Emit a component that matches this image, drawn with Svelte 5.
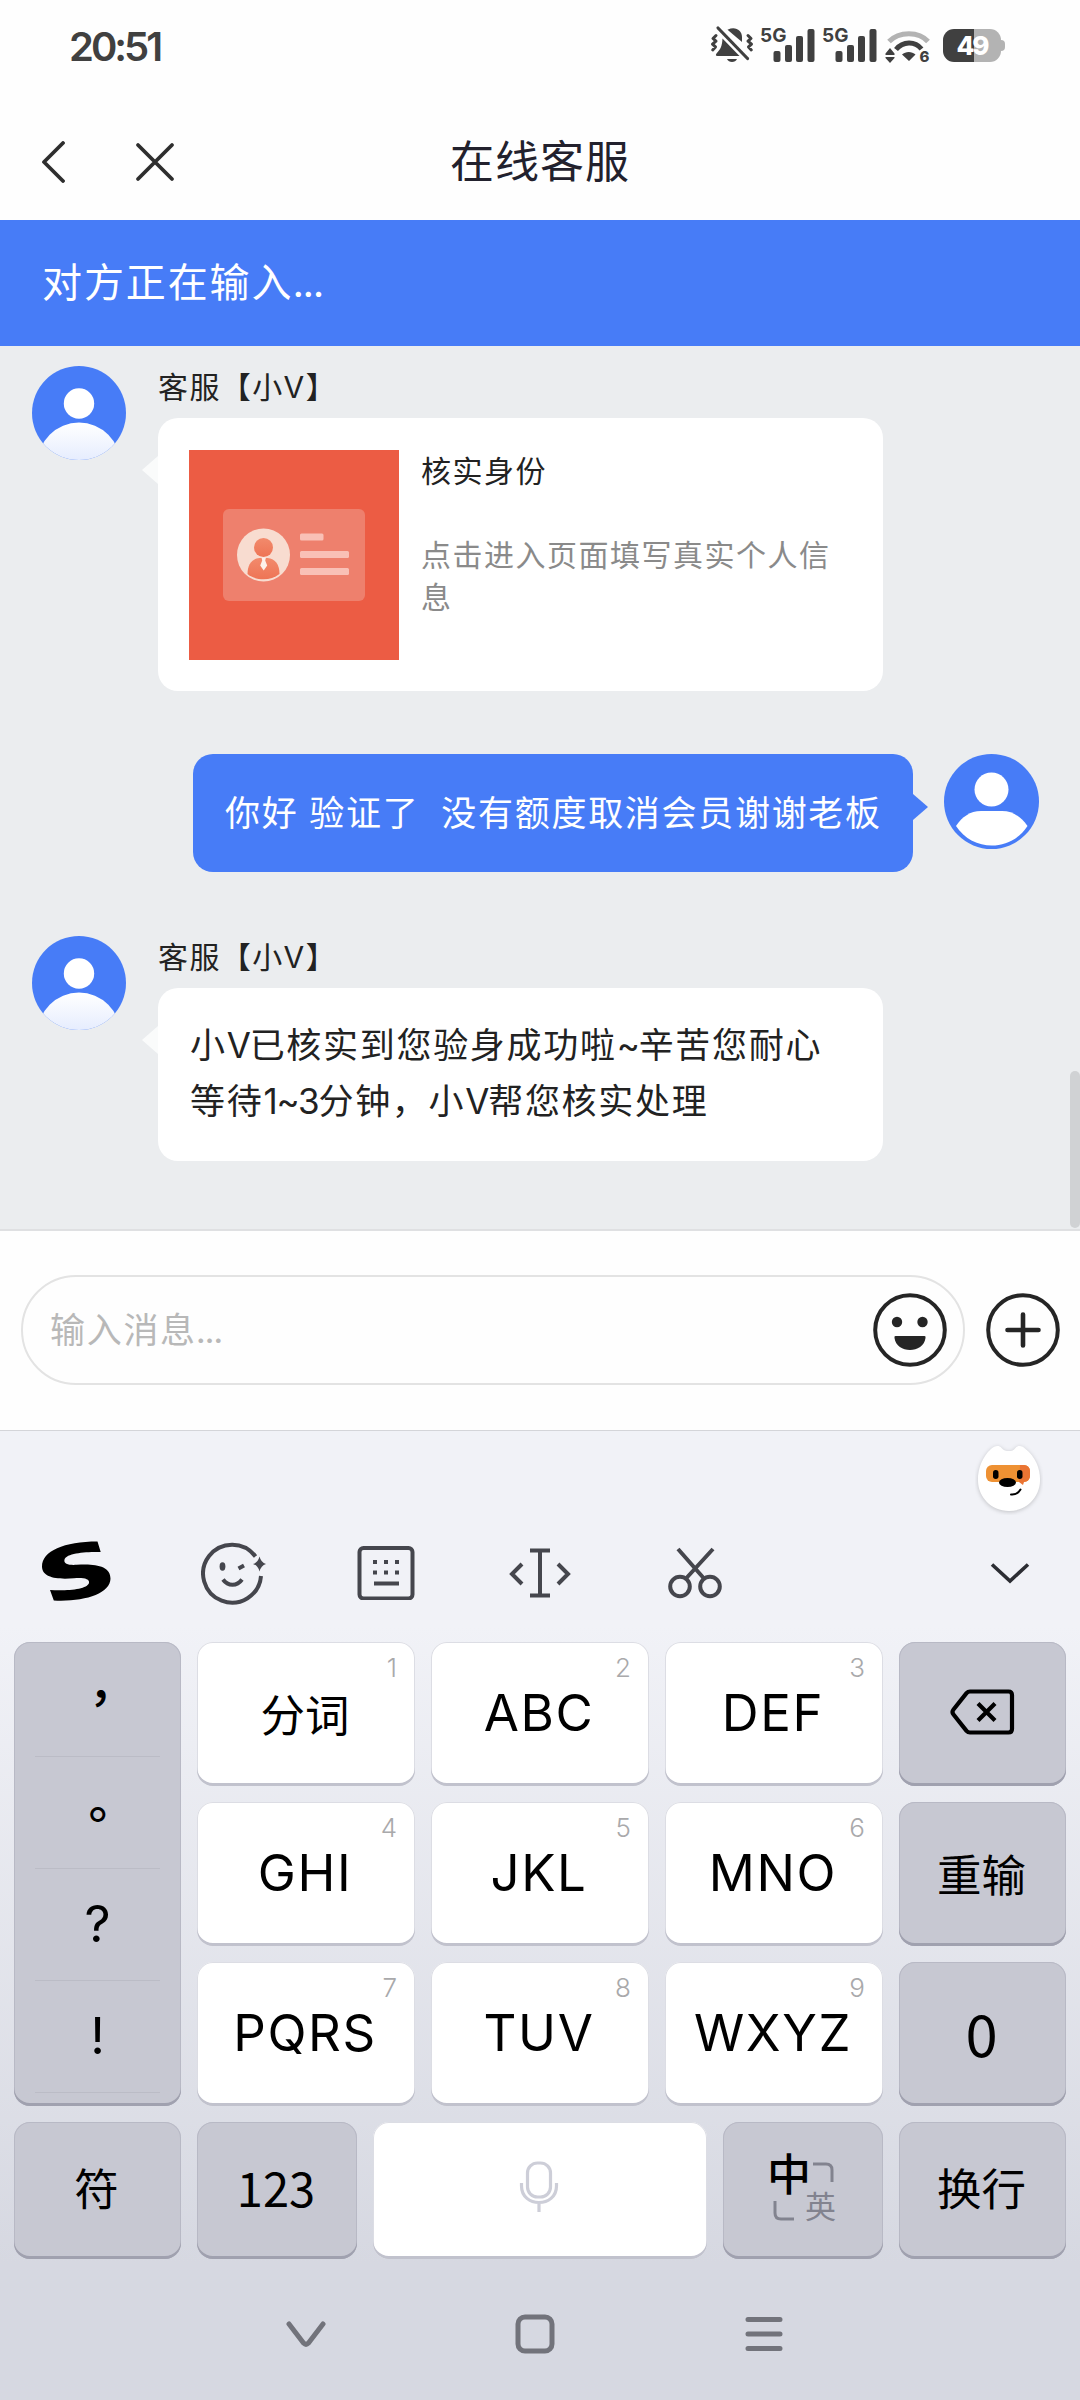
<script lang="ts">
	type Message = {
		id: number;
		from: 'agent' | 'user';
		name?: string;
		lines?: string[];
		card?: { title: string; desc: string };
	};

	const messages: Message[] = [
		{
			id: 1,
			from: 'agent',
			name: '客服【小V】',
			card: { title: '核实身份', desc: '点击进入页面填写真实个人信息' }
		},
		{ id: 2, from: 'user', lines: ['你好 验证了  没有额度取消会员谢谢老板'] },
		{
			id: 3,
			from: 'agent',
			name: '客服【小V】',
			lines: ['小V已核实到您验身成功啦~辛苦您耐心', '等待1~3分钟，小V帮您核实处理']
		}
	];

	const keys = [
		{ label: '分词', num: 1, cjk: true },
		{ label: 'ABC', num: 2 },
		{ label: 'DEF', num: 3 },
		{ label: 'GHI', num: 4 },
		{ label: 'JKL', num: 5 },
		{ label: 'MNO', num: 6 },
		{ label: 'PQRS', num: 7 },
		{ label: 'TUV', num: 8 },
		{ label: 'WXYZ', num: 9 }
	];

	const sims = [1, 2];

	// latin runs sit tighter than the chinese text around them
	function runs(line: string) {
		return line.split(/([A-Z~\d]+)/).filter(Boolean);
	}
	function isLatin(run: string) {
		return /^[A-Z~\d]/.test(run);
	}
</script>

<div class="phone">
	<div class="status">
		<span class="time">20:51</span>
		<div class="status-icons">
			<svg class="bell" width="44" height="38" viewBox="0 0 44 38">
				<g fill="#404040">
					<path d="M18 4.500C25 .8 32 5 32 12v5L17.500 4.800z" />
					<path d="M12.500 13.500 29.500 31H7.500c-2 0-2-1.500-.8-2.800C10.500 24 12 22 12.500 13.500z" />
					<path d="M17 34h10c-1.500 4-8.500 4-10 0z" />
				</g>
				<g fill="none" stroke="#404040" stroke-linecap="round" stroke-linejoin="round">
					<path d="M8 3 37.500 33.500" stroke-width="3.200" />
					<path
						d="M6 10.500 3 13.500l3 2.700-3.500 3 3 2.700-2.800 3M38 10.500l3 3-3 2.700 3.500 3-3 2.700 2.800 3"
						stroke-width="3"
					/>
				</g>
			</svg>
			{#each sims as sim (sim)}
				<svg class="signal" width="56" height="38" viewBox="0 0 56 38">
					<text x="0" y="16.500" class="net">5G</text>
					<g fill="#404040">
						<rect x="13.500" y="26" width="7" height="11" rx="2" />
						<rect x="25" y="20" width="7" height="17" rx="2" />
						<rect x="36" y="11" width="7" height="26" rx="2" />
						<rect x="47.500" y="4" width="7" height="33" rx="2" />
					</g>
				</svg>
			{/each}
			<svg class="wifi" width="50" height="42" viewBox="0 0 50 42">
				<path d="M4 16.500C14 6 34 6 43 16.500" fill="none" stroke="#b3b3b3" stroke-width="5" />
				<path d="M11 24.500C18 16 30 16 36.500 24" fill="none" stroke="#404040" stroke-width="5" />
				<path
					d="M17 29.500c3.500-3.500 10-3.500 13.500 0L24 36zM5 23l4.500 5.500v1.500h-9v-1.500zM.5 32h9v1L5 38l-4.500-5z"
					fill="#404040"
				/>
				<text x="34.500" y="37" class="gen">6</text>
			</svg>
			<div class="battery"><span>49</span></div>
		</div>
	</div>

	<header class="nav">
		<svg width="24" height="42" viewBox="0 0 24 42">
			<path
				d="M22 2 3 21l19 19"
				fill="none"
				stroke="#2e2e2e"
				stroke-width="3.800"
				stroke-linecap="round"
				stroke-linejoin="round"
			/>
		</svg>
		<svg class="close" width="40" height="40" viewBox="0 0 40 40">
			<path
				d="m3 3 34 34M37 3 3 37"
				fill="none"
				stroke="#2e2e2e"
				stroke-width="3.800"
				stroke-linecap="round"
			/>
		</svg>
		<h1>在线客服</h1>
	</header>

	<div class="typing">对方正在输入<span class="dots">...</span></div>

	<main class="chat">
		{#each messages as m (m.id)}
			<div class="row {m.from}">
				{#if m.from === 'agent'}
					<svg class="avatar" width="94" height="94" viewBox="0 0 94 94">
						<defs>
							<linearGradient id="body{m.id}" x1="0" y1="57" x2="0" y2="94" gradientUnits="userSpaceOnUse">
								<stop offset="0" stop-color="#fff" />
								<stop offset="1" stop-color="#e6edfe" />
							</linearGradient>
							<clipPath id="clip{m.id}"><circle cx="47" cy="47" r="47" /></clipPath>
						</defs>
						<g clip-path="url(#clip{m.id})">
							<rect width="94" height="94" fill="#477cf7" />
							<circle cx="47" cy="37.500" r="15.200" fill="#fff" />
							<circle cx="47" cy="98" r="41.500" fill="url(#body{m.id})" />
						</g>
					</svg>
				{/if}
				<div class="content">
					{#if m.name}<div class="name">{m.name}</div>{/if}
					<div class="bubble" class:card={m.card}>
						{#if m.card}
							<svg class="thumb" width="210" height="210" viewBox="0 0 210 210">
								<defs>
									<linearGradient id="man" x1="0" y1="0" x2="0" y2="1">
										<stop offset="0" stop-color="#f28a6c" />
										<stop offset="1" stop-color="#ee7455" />
									</linearGradient>
								</defs>
								<rect width="210" height="210" fill="#ec5c44" />
								<rect x="34" y="59" width="142" height="92" rx="6" fill="#ee806d" />
								<circle cx="74.500" cy="105" r="26.500" fill="#f8dcd0" />
								<circle cx="74.500" cy="97.500" r="9.500" fill="url(#man)" />
								<path
									d="M58.500 124c0-9 4-15.500 12-16h8c8 .5 12 7 12 16-8.500 7-23.500 7-32 0z"
									fill="url(#man)"
								/>
								<path d="m72.500 107.500h4.500l-.8 3 2 5-3.500 5-3.500-5 2-5z" fill="#fdf0ea" />
								<g fill="#f9c0b6">
									<rect x="111" y="83.500" width="23.500" height="7" rx="1.500" />
									<rect x="111" y="101" width="49" height="7" rx="1.500" />
									<rect x="111" y="118" width="49" height="7" rx="1.500" />
								</g>
							</svg>
							<div class="card-text">
								<div class="card-title">{m.card.title}</div>
								<div class="card-desc">{m.card.desc}</div>
							</div>
						{:else if m.lines}
							{#each m.lines as line}
								<p>{#each runs(line) as run}<span class:latin={isLatin(run)}>{run}</span>{/each}</p>
							{/each}
						{/if}
					</div>
				</div>
				{#if m.from === 'user'}
					<svg class="avatar" width="95" height="95" viewBox="0 0 95 95">
						<circle cx="47.500" cy="47.500" r="47.500" fill="#477cf7" />
						<circle cx="47.500" cy="35.500" r="17" fill="#fff" />
						<path
							d="M12 72c6-9 14-15 25-15h21c11 0 19 6 25.500 15-17 26-54.500 26-71.500 0z"
							fill="#fff"
						/>
					</svg>
				{/if}
			</div>
		{/each}
		<div class="scrollbar"></div>
	</main>

	<div class="composer">
		<div class="field">
			<span class="placeholder">输入消息<span class="dots">...</span></span>
			<svg width="74" height="74" viewBox="0 0 74 74">
				<circle cx="37" cy="37" r="34.800" fill="none" stroke="#252525" stroke-width="4" />
				<circle cx="24" cy="29" r="5.200" fill="#252525" />
				<circle cx="49.500" cy="29" r="5.200" fill="#252525" />
				<path d="M22.500 43h29q1.500 0 1 2c-2 16-29 16-31 0q-.5-2 1-2z" fill="#252525" />
			</svg>
		</div>
		<svg width="74" height="74" viewBox="0 0 74 74">
			<circle cx="37" cy="37" r="34.800" fill="none" stroke="#252525" stroke-width="4" />
			<path d="M37 21.500v31M21.500 37h31" stroke="#252525" stroke-width="4.600" stroke-linecap="round" />
		</svg>
	</div>

	<section class="keyboard">
		<div class="mascot">
			<svg width="68" height="72" viewBox="0 0 68 72">
				<path
					d="M34 8c3 0 4.500-.5 6.500-3 3-3.500 7-2 10 1C61 14 65.500 27 65 38c-.5 16-13 30-31 30S3.500 54 3 38C2.500 27 7 14 16 6c3.500-3 7.500-4.500 10.500-1 2 2.500 4.500 3 7.500 3z"
					fill="#fff"
					class="head"
				/>
				<rect x="11" y="22" width="44" height="17" rx="6" fill="#ee9133" />
				<path d="M45 22h4a6 6 0 0 1 6 6v5a6 6 0 0 1-6 6l-1 3-4-3z" fill="#ea7433" />
				<rect x="18" y="27" width="5.500" height="9" rx="2.700" />
				<rect x="42" y="27" width="5.500" height="9" rx="2.700" />
				<ellipse cx="32.500" cy="39.500" rx="8.500" ry="4.500" />
				<path d="M36 51.500c5 .5 7.500-1.500 9.500-5" fill="none" stroke="#000" stroke-width="2" stroke-linecap="round" />
			</svg>
		</div>

		<div class="toolbar">
			<svg class="logo" width="72" height="62" viewBox="0 0 72 62">
				<path
					d="M57.500 1.500l3.200 10.500C46 11.700 26.500 13 24.500 19.500c-1.300 4.700 5 5.800 12 5.300 18-1.500 34.500 1 34 14C70 54 44 62 13.800 60.500L10 50c17 1 37-.5 39-7 1-4.500-6-5.500-15-4.800C17 39.800 2 37.500 2 26.500 2 11 24 1.500 57.500 1.500z"
				/>
			</svg>
			<svg width="66" height="66" viewBox="0 0 66 66" class="line">
				<path d="M54.500 16.500A29 29 0 1 0 60 36" />
				<path d="m37.500 28.500 5.500-3M22 39.500c5 7 14 7 19 0" />
				<ellipse cx="21.500" cy="26.500" rx="2.900" ry="4.200" class="dot" />
				<path d="M58.500 16.500q1.500 6 6.500 7.500-5 1.500-6.500 7.500-1.500-6-6.500-7.500 5-1.500 6.500-7.500z" class="dot" />
			</svg>
			<svg width="58" height="54" viewBox="0 0 58 54" class="line">
				<rect x="2.500" y="2" width="53" height="50.500" rx="4" />
				<path d="M18 14v4M29 14v4M40 14v4M18 24.500v4M29 24.500v4M40 24.500v4M17 37.500h25" />
			</svg>
			<svg width="62" height="50" viewBox="0 0 62 50" class="line">
				<path d="M21 2.500h20M21 47.500h20M31 2.500v45M13 16 3 26l10 10M49 16l10 10-10 10" />
			</svg>
			<svg width="54" height="52" viewBox="0 0 54 52" class="line">
				<circle cx="12" cy="39.500" r="9.800" />
				<circle cx="42" cy="39.500" r="9.800" />
				<path d="M10 2 36 31.500M45 2 18 31.500" />
			</svg>
			<svg class="hide" width="40" height="22" viewBox="0 0 40 22">
				<path d="m2 2.500 18 16.500L38 2.500" fill="none" stroke="#2c2d33" stroke-width="3.600" />
			</svg>
		</div>

		<div class="keys">
			<div class="key grey punct">
				<span class="comma">，</span>
				<span class="stop">。</span>
				<span>?</span>
				<span>!</span>
			</div>
			{#each keys as k, i (k.num)}
				<button class="key" class:cjk={k.cjk}>
					{k.label}<sup>{k.num}</sup>
				</button>
				{#if i === 2}
					<button class="key grey" aria-label="删除">
						<svg width="66" height="48" viewBox="0 0 66 48" fill="none" stroke="#000" stroke-width="4.200">
							<path
								d="M21 3.500h38.500q3.500 0 3.500 3.500v34q0 3.500-3.500 3.500H21q-2 0-3.500-1.700L4.500 26.500q-2-2.500 0-5L17.500 5.200Q19 3.500 21 3.500z"
							/>
							<path d="m29 15.500 17 17M46 15.500l-17 17" />
						</svg>
					</button>
				{:else if i === 5}
					<button class="key grey cjk">重输</button>
				{:else if i === 8}
					<button class="key grey zero">0</button>
				{/if}
			{/each}
		</div>

		<div class="bottom-row">
			<button class="key grey cjk side">符</button>
			<button class="key grey digits">123</button>
			<button class="key space" aria-label="空格">
				<svg width="40" height="54" viewBox="0 0 40 54" fill="none" stroke="#cdced8" stroke-width="3.200">
					<rect x="8.500" y="3" width="23" height="34" rx="10" />
					<path d="M2.500 23v3c0 22 35 22 35 0v-3M20 43v9" />
				</svg>
			</button>
			<button class="key grey lang">
				<span class="zh">中</span>
				<svg class="corner" width="22" height="22" viewBox="0 0 22 22">
					<path d="M1 3h13q6 0 6 6v12" />
				</svg>
				<svg class="corner low" width="22" height="22" viewBox="0 0 22 22">
					<path d="M2 1v12q0 6 6 6h13" />
				</svg>
				<span class="en">英</span>
			</button>
			<button class="key grey cjk side">换行</button>
		</div>

		<div class="sysnav">
			<svg width="40" height="40" viewBox="0 0 40 40">
				<path d="m3 10 14.500 19q2.500 2.500 5 0L37 10" />
			</svg>
			<svg width="40" height="40" viewBox="0 0 40 40">
				<rect x="3" y="3" width="34" height="34" rx="7" />
			</svg>
			<svg width="40" height="40" viewBox="0 0 40 40">
				<path d="M4 5.500h32M4 20h32M4 34.500h32" />
			</svg>
		</div>
	</section>
</div>

<style>
	:global(body) {
		margin: 0;
		background: #fff;
	}
	.phone {
		width: 1080px;
		height: 2400px;
		overflow: hidden;
		display: flex;
		flex-direction: column;
		font-family: Inter, 'Noto Sans CJK SC', sans-serif;
		color: #222;
		background: #fefefe;
	}
	svg {
		display: block;
		flex: none;
	}

	.status {
		height: 92px;
		display: flex;
		justify-content: space-between;
		padding: 0 79px 0 69px;
		box-sizing: border-box;
	}
	.time {
		font-size: 40px;
		font-weight: 600;
		line-height: 93px;
		letter-spacing: -3px;
		color: #404040;
	}
	.status-icons {
		display: flex;
		padding-top: 25px;
	}
	.bell {
		margin-right: 6px;
	}
	.signal {
		margin-right: 6px;
	}
	.net {
		font: 700 19px Inter, sans-serif;
		fill: #404040;
	}
	.wifi {
		margin-left: 1px;
	}
	.gen {
		font: 800 15px Inter, sans-serif;
		fill: #404040;
	}
	.battery {
		position: relative;
		width: 58px;
		height: 33px;
		margin: 4px 0 0 8px;
		border-radius: 11px;
		background: linear-gradient(90deg, #404040 31px, #b3b3b3 31px);
		color: #fff;
		font-size: 26px;
		font-weight: 800;
		line-height: 34px;
		text-align: center;
		letter-spacing: -2px;
	}
	.battery::after {
		content: '';
		position: absolute;
		right: -4px;
		top: 11px;
		width: 5px;
		height: 11px;
		border-radius: 0 4px 4px 0;
		background: #b3b3b3;
	}

	.nav {
		position: relative;
		height: 128px;
		display: flex;
		align-items: center;
		padding: 12px 0 0 41px;
		box-sizing: border-box;
	}
	.close {
		margin-left: 70px;
	}
	h1 {
		position: absolute;
		inset: 0;
		margin: 0;
		text-align: center;
		font-size: 44px;
		font-weight: 400;
		letter-spacing: 1px;
		line-height: 140px;
		color: #22212d;
		pointer-events: none;
	}

	.typing {
		height: 126px;
		padding-left: 42px;
		background: #477cf7;
		color: #fff;
		font-size: 40px;
		letter-spacing: 1.9px;
		line-height: 126px;
	}
	.dots {
		letter-spacing: -1.4px;
		margin-left: -1px;
	}

	.chat {
		position: relative;
		height: 883px;
		box-sizing: border-box;
		padding-top: 20px;
		background: #ebedef;
	}
	.row {
		display: flex;
	}
	.row.agent {
		padding-left: 32px;
	}
	.row.user {
		justify-content: flex-end;
		gap: 31px;
		padding: 63px 41px 64px 0;
	}
	.agent .content {
		margin-left: 32px;
	}
	.name {
		height: 52px;
		font-size: 30px;
		letter-spacing: 1.4px;
		line-height: 42px;
	}
	.bubble {
		position: relative;
		width: 725px;
		box-sizing: border-box;
		padding: 29px 32px 32px;
		border-radius: 20px;
		background: #fff;
		font-size: 35px;
		letter-spacing: 1.7px;
		line-height: 56px;
	}
	.bubble p {
		margin: 0;
		white-space: pre;
	}
	.latin {
		letter-spacing: -1.2px;
	}
	.agent .bubble::before {
		content: '';
		position: absolute;
		left: -16px;
		top: 38px;
		border: solid transparent;
		border-width: 14px 16px 14px 0;
		border-right-color: #fafbfb;
	}
	.user .bubble {
		width: 720px;
		height: 118px;
		padding: 31px 32px;
		background: #477cf7;
		color: #fff;
		word-spacing: -0.6px;
	}
	.user .bubble::after {
		content: '';
		position: absolute;
		right: -15px;
		top: 40px;
		border: solid transparent;
		border-width: 13px 0 13px 15px;
		border-left-color: #477cf7;
	}
	.bubble.card {
		display: flex;
		gap: 22px;
		height: 273px;
		padding: 32px 31px;
		font-size: 30px;
		letter-spacing: 1.5px;
		line-height: 42px;
	}
	.card-text {
		width: 420px;
	}
	.card-desc {
		margin-top: 42px;
		color: #8a8a8a;
	}
	.scrollbar {
		position: absolute;
		right: 0;
		top: 725px;
		width: 10px;
		height: 157px;
		border-radius: 5px;
		background: #d0d2d4;
	}

	.composer {
		height: 201px;
		box-sizing: border-box;
		display: flex;
		align-items: center;
		gap: 21px;
		padding: 0 0 2px 21px;
		border-top: 2px solid #dfe0e2;
		background: #fefefe;
	}
	.field {
		width: 944px;
		height: 110px;
		box-sizing: border-box;
		display: flex;
		align-items: center;
		justify-content: space-between;
		padding: 0 16px 0 27px;
		border: 2px solid #e3e3e3;
		border-radius: 55px;
	}
	.placeholder {
		font-size: 35px;
		letter-spacing: 1.7px;
		color: #b8b8b8;
		padding-bottom: 4px;
	}

	.keyboard {
		height: 970px;
		box-sizing: border-box;
		border-top: 1px solid #d4d5d9;
		background: linear-gradient(#f1f2f7 20%, #d6d8e1 86%);
	}
	.mascot {
		display: flex;
		justify-content: flex-end;
		height: 109px;
		box-sizing: border-box;
		padding: 12px 37px 0 0;
	}
	.head {
		filter: drop-shadow(0 1px 2px #0003);
	}
	.toolbar {
		display: flex;
		align-items: center;
		height: 66px;
		padding: 0 50px 0 40px;
	}
	.logo {
		margin-bottom: 4px;
	}
	.toolbar svg:nth-child(2) {
		margin-left: 89px;
	}
	.toolbar svg:nth-child(3) {
		margin-left: 90px;
	}
	.toolbar svg:nth-child(4) {
		margin-left: 94px;
	}
	.toolbar svg:nth-child(5) {
		margin-left: 97px;
	}
	.toolbar .hide {
		margin-left: auto;
	}
	.line {
		fill: none;
		stroke: #45464d;
		stroke-width: 4;
	}
	.dot {
		fill: #45464d;
		stroke: none;
	}

	.keys {
		display: grid;
		grid-template-columns: 167px repeat(3, 218px) 167px;
		grid-auto-rows: 144px;
		gap: 16px;
		padding: 36px 14px 0;
	}
	.key {
		position: relative;
		display: flex;
		align-items: center;
		justify-content: center;
		border: 0;
		border-radius: 16px;
		padding: 0 2px 4px 0;
		box-sizing: border-box;
		background: #fff;
		box-shadow:
			inset 0 -3px #c1c2cd,
			inset 0 0 0 1px #dcdde4;
		font: 400 51px Inter, 'Noto Sans CJK SC', sans-serif;
		letter-spacing: 1.6px;
		color: #000;
	}
	.key.grey {
		background: #c7c8d2;
		box-shadow:
			inset 0 -3px #a0a1af,
			inset 0 0 0 1px #b8b9c5;
	}
	.key.cjk {
		font-size: 44.5px;
		font-family: 'Noto Sans CJK SC', sans-serif;
		letter-spacing: 0;
	}
	sup {
		position: absolute;
		top: 10px;
		right: 18px;
		font: 300 26px/32px Inter, sans-serif;
		letter-spacing: 0;
		color: #a9a9ab;
	}
	.punct {
		grid-row: span 3;
		flex-direction: column;
		justify-content: flex-start;
		padding: 3px 0 0;
		letter-spacing: 0;
	}
	.punct span {
		width: 125px;
		height: 112px;
		box-sizing: border-box;
		border-bottom: 1px solid #bbbcc6;
		line-height: 110px;
		text-align: center;
	}
	.punct .comma,
	.punct .stop {
		padding-left: 30px;
		font-size: 48px;
		font-family: 'Noto Sans CJK SC', sans-serif;
		font-weight: 500;
	}
	.punct .comma {
		line-height: 70px;
	}
	.punct .stop {
		line-height: 80px;
	}
	.zero {
		font: 400 58px 'Noto Sans CJK SC', sans-serif;
		letter-spacing: 0;
	}
	.bottom-row {
		display: flex;
		gap: 16px;
		height: 137px;
		padding: 16px 14px 0;
	}
	.bottom-row .key {
		padding-bottom: 8px;
	}
	.side {
		width: 167px;
	}
	.digits {
		width: 160px;
		font: 400 47px 'Noto Sans CJK SC', sans-serif;
		letter-spacing: 0;
	}
	.space {
		width: 334px;
	}
	.lang {
		width: 160px;
		letter-spacing: 0;
	}
	.lang > * {
		position: absolute;
	}
	.zh {
		left: 44px;
		top: 20px;
		font: 500 44px/60px 'Noto Sans CJK SC', sans-serif;
	}
	.en {
		left: 82px;
		top: 62px;
		font: 400 31px/42px 'Noto Sans CJK SC', sans-serif;
		color: #82838f;
	}
	.corner {
		left: 89px;
		top: 39px;
		fill: none;
		stroke: #82838f;
		stroke-width: 3;
	}
	.corner.low {
		left: 50px;
		top: 78px;
	}

	.sysnav {
		display: flex;
		gap: 189px;
		padding: 55px 0 0 286px;
		fill: none;
		stroke: #72737b;
		stroke-width: 5;
		stroke-linecap: round;
		stroke-linejoin: round;
	}
</style>
